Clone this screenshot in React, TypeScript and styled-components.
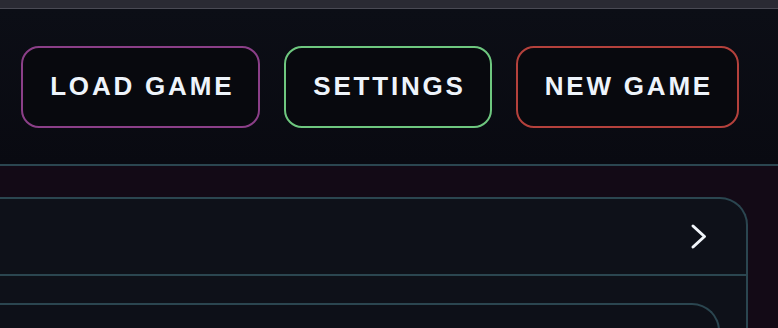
import React from "react";
import styled, { createGlobalStyle } from "styled-components";

const GlobalStyle = createGlobalStyle`
  html, body {
    margin: 0;
    padding: 0;
    background: #0c0e16;
    overflow: hidden;
  }
  #root {
    width: 778px;
    height: 328px;
  }
`;

const Page = styled.div`
  display: flex;
  flex-direction: column;
  width: 778px;
  height: 328px;
  overflow: hidden;
`;

const TitleBar = styled.div`
  flex-shrink: 0;
  height: 8px;
  background: #2a2a33;
  border-bottom: 1px solid #4a4a54;
`;

const Header = styled.header`
  flex-shrink: 0;
  height: 155px;
  display: flex;
  align-items: center;
  justify-content: flex-end;
  gap: 24px;
  padding-right: 39px;
  background: linear-gradient(180deg, #0c0e16 0%, #090a11 100%);
  border-bottom: 2px solid #2b4650;
`;

const MenuButton = styled.button<{ $accent: string }>`
  height: 82px;
  padding: 0 24px 0 27px;
  border: 2px solid ${(p) => p.$accent};
  border-radius: 18px;
  background: #08090e;
  color: #eef4fb;
  font-family: "Liberation Sans", "DejaVu Sans", sans-serif;
  font-weight: 700;
  font-size: 26px;
  letter-spacing: 2.8px;
  cursor: pointer;
`;

const Content = styled.main`
  flex: 1;
  min-height: 0;
  display: flex;
  flex-direction: column;
  padding: 31px 30px 0 0;
  background: #130a16;
`;

const Panel = styled.section`
  flex: 1;
  margin-left: -20px;
  background: #0e1119;
  border: 2px solid #2b4650;
  border-bottom: none;
  border-top-right-radius: 28px;
`;

const PanelRow = styled.div`
  height: 75px;
  display: flex;
  align-items: center;
  justify-content: flex-end;
  padding-right: 38px;
  border-bottom: 2px solid #2b4650;
`;

const PanelBody = styled.div`
  padding: 27px 26px 0 0;
`;

const InnerCard = styled.div`
  height: 80px;
  margin-left: -20px;
  border: 2px solid #2b4650;
  border-bottom: none;
  border-top-right-radius: 28px;
  background: #0d1018;
`;

const Chevron = () => (
  <svg width="18" height="27" viewBox="0 0 18 27" fill="none">
    <path
      d="M3 3 L14.5 13.5 L3 24"
      stroke="#f2f6fb"
      strokeWidth="3"
      strokeLinecap="round"
      strokeLinejoin="round"
    />
  </svg>
);

const buttons = [
  { label: "LOAD GAME", accent: "#8b3f88" },
  { label: "SETTINGS", accent: "#6ec77f" },
  { label: "NEW GAME", accent: "#b4413c" },
];

export default function App() {
  return (
    <Page>
      <GlobalStyle />
      <TitleBar />
      <Header>
        {buttons.map((b) => (
          <MenuButton key={b.label} $accent={b.accent}>
            {b.label}
          </MenuButton>
        ))}
      </Header>
      <Content>
        <Panel>
          <PanelRow>
            <Chevron />
          </PanelRow>
          <PanelBody>
            <InnerCard />
          </PanelBody>
        </Panel>
      </Content>
    </Page>
  );
}
